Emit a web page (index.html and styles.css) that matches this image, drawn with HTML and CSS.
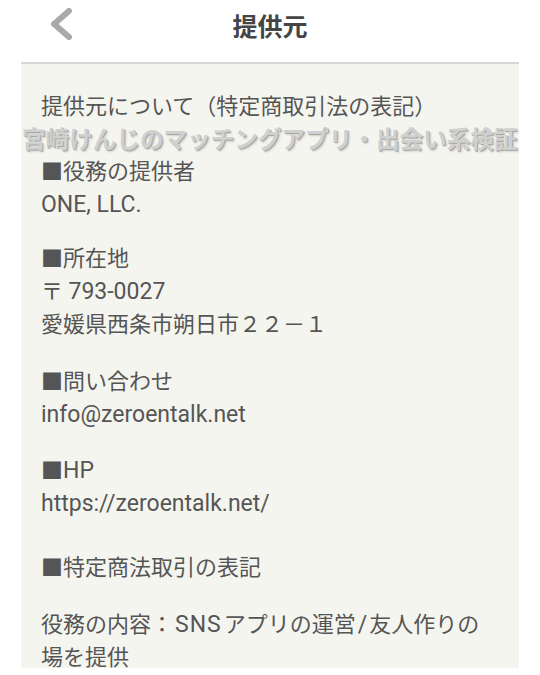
FILE: index.html
```html
<!DOCTYPE html>
<html lang="ja">
<head>
<meta charset="utf-8">
<title>提供元</title>
<link rel="stylesheet" href="styles.css">
</head>
<body>
<div class="page">
  <header class="header">
    <div class="back">
      <svg width="26" height="36" viewBox="0 0 26 36" aria-hidden="true">
        <polyline points="19,3 4,16 19,29" fill="none" stroke="#a9a9a9" stroke-width="6" stroke-linecap="round" stroke-linejoin="round"/>
      </svg>
    </div>
    <h1 class="title">提供元</h1>
    <div></div>
  </header>
  <main class="panel">
    <p class="intro">提供元について（特定商取引法の表記）</p>
    <section class="sec sec-first">
      <div>■役務の提供者</div>
      <div class="lat">ONE, LLC.</div>
    </section>
    <section class="sec sec-tight">
      <div>■所在地</div>
      <div>〒 <span class="lat">793-0027</span></div>
      <div>愛媛県西条市朔日市２２－１</div>
    </section>
    <section class="sec">
      <div>■問い合わせ</div>
      <div class="lat">info@zeroentalk.net</div>
    </section>
    <section class="sec">
      <div>■<span class="lat">HP</span></div>
      <div class="lat">https://zeroentalk.net/</div>
    </section>
    <section class="sec sec-wide">
      <div>■特定商法取引の表記</div>
    </section>
    <section class="sec">
      <div>役務の内容：<span class="lat sns">SNS</span>アプリの運営<span class="lat slash">/</span>友人作りの<br>場を提供</div>
    </section>
  </main>
</div>
<div class="watermark">宮崎けんじのマッチングアプリ・出会い系検証</div>
</body>
</html>
```
FILE: styles.css
```css
html, body {
  margin: 0;
  padding: 0;
  background: #ffffff;
}
body {
  font-family: Roboto, "Noto Sans CJK JP", sans-serif;
  color: #555555;
  width: 540px;
  height: 675px;
  overflow: hidden;
  position: relative;
}
.page {
  width: 498px;
  margin-left: 21px;
}
.header {
  height: 62px;
  border-bottom: 2px solid #d6d6d2;
  display: grid;
  grid-template-columns: 1fr auto 1fr;
  align-items: start;
  background: #ffffff;
}
.back {
  padding-left: 29px;
  padding-top: 8px;
  line-height: 0;
}
.title {
  margin: 0;
  font-family: "Noto Sans CJK JP", sans-serif;
  font-size: 25px;
  font-weight: 700;
  color: #454545;
  line-height: 50px;
}
.panel {
  background: #f5f5f0;
  padding: 26px 20px 0 20px;
  height: 604px;
  box-sizing: border-box;
  font-size: 22px;
  line-height: 33px;
}
.lat {
  font-size: 23px;
}
.sns {
  padding: 0 2px;
  letter-spacing: 1px;
}
.slash {
  padding: 0 2px;
}
.intro {
  margin: 0 0 32px 0;
}
.sec {
  margin-top: 23.5px;
}
.sec-first {
  margin-top: 0;
}
.sec-tight {
  margin-top: 21px;
}
.sec-wide {
  margin-top: 31px;
}
.watermark {
  position: absolute;
  left: 22px;
  top: 125px;
  font-family: "Noto Sans CJK JP", sans-serif;
  font-weight: 700;
  font-size: 23.6px;
  line-height: 26px;
  color: #d0d0d0;
  white-space: nowrap;
  text-shadow: 1px 1px 0 #a8a8a8, 2px 2px 2px rgba(0, 0, 0, 0.15);
}
```
